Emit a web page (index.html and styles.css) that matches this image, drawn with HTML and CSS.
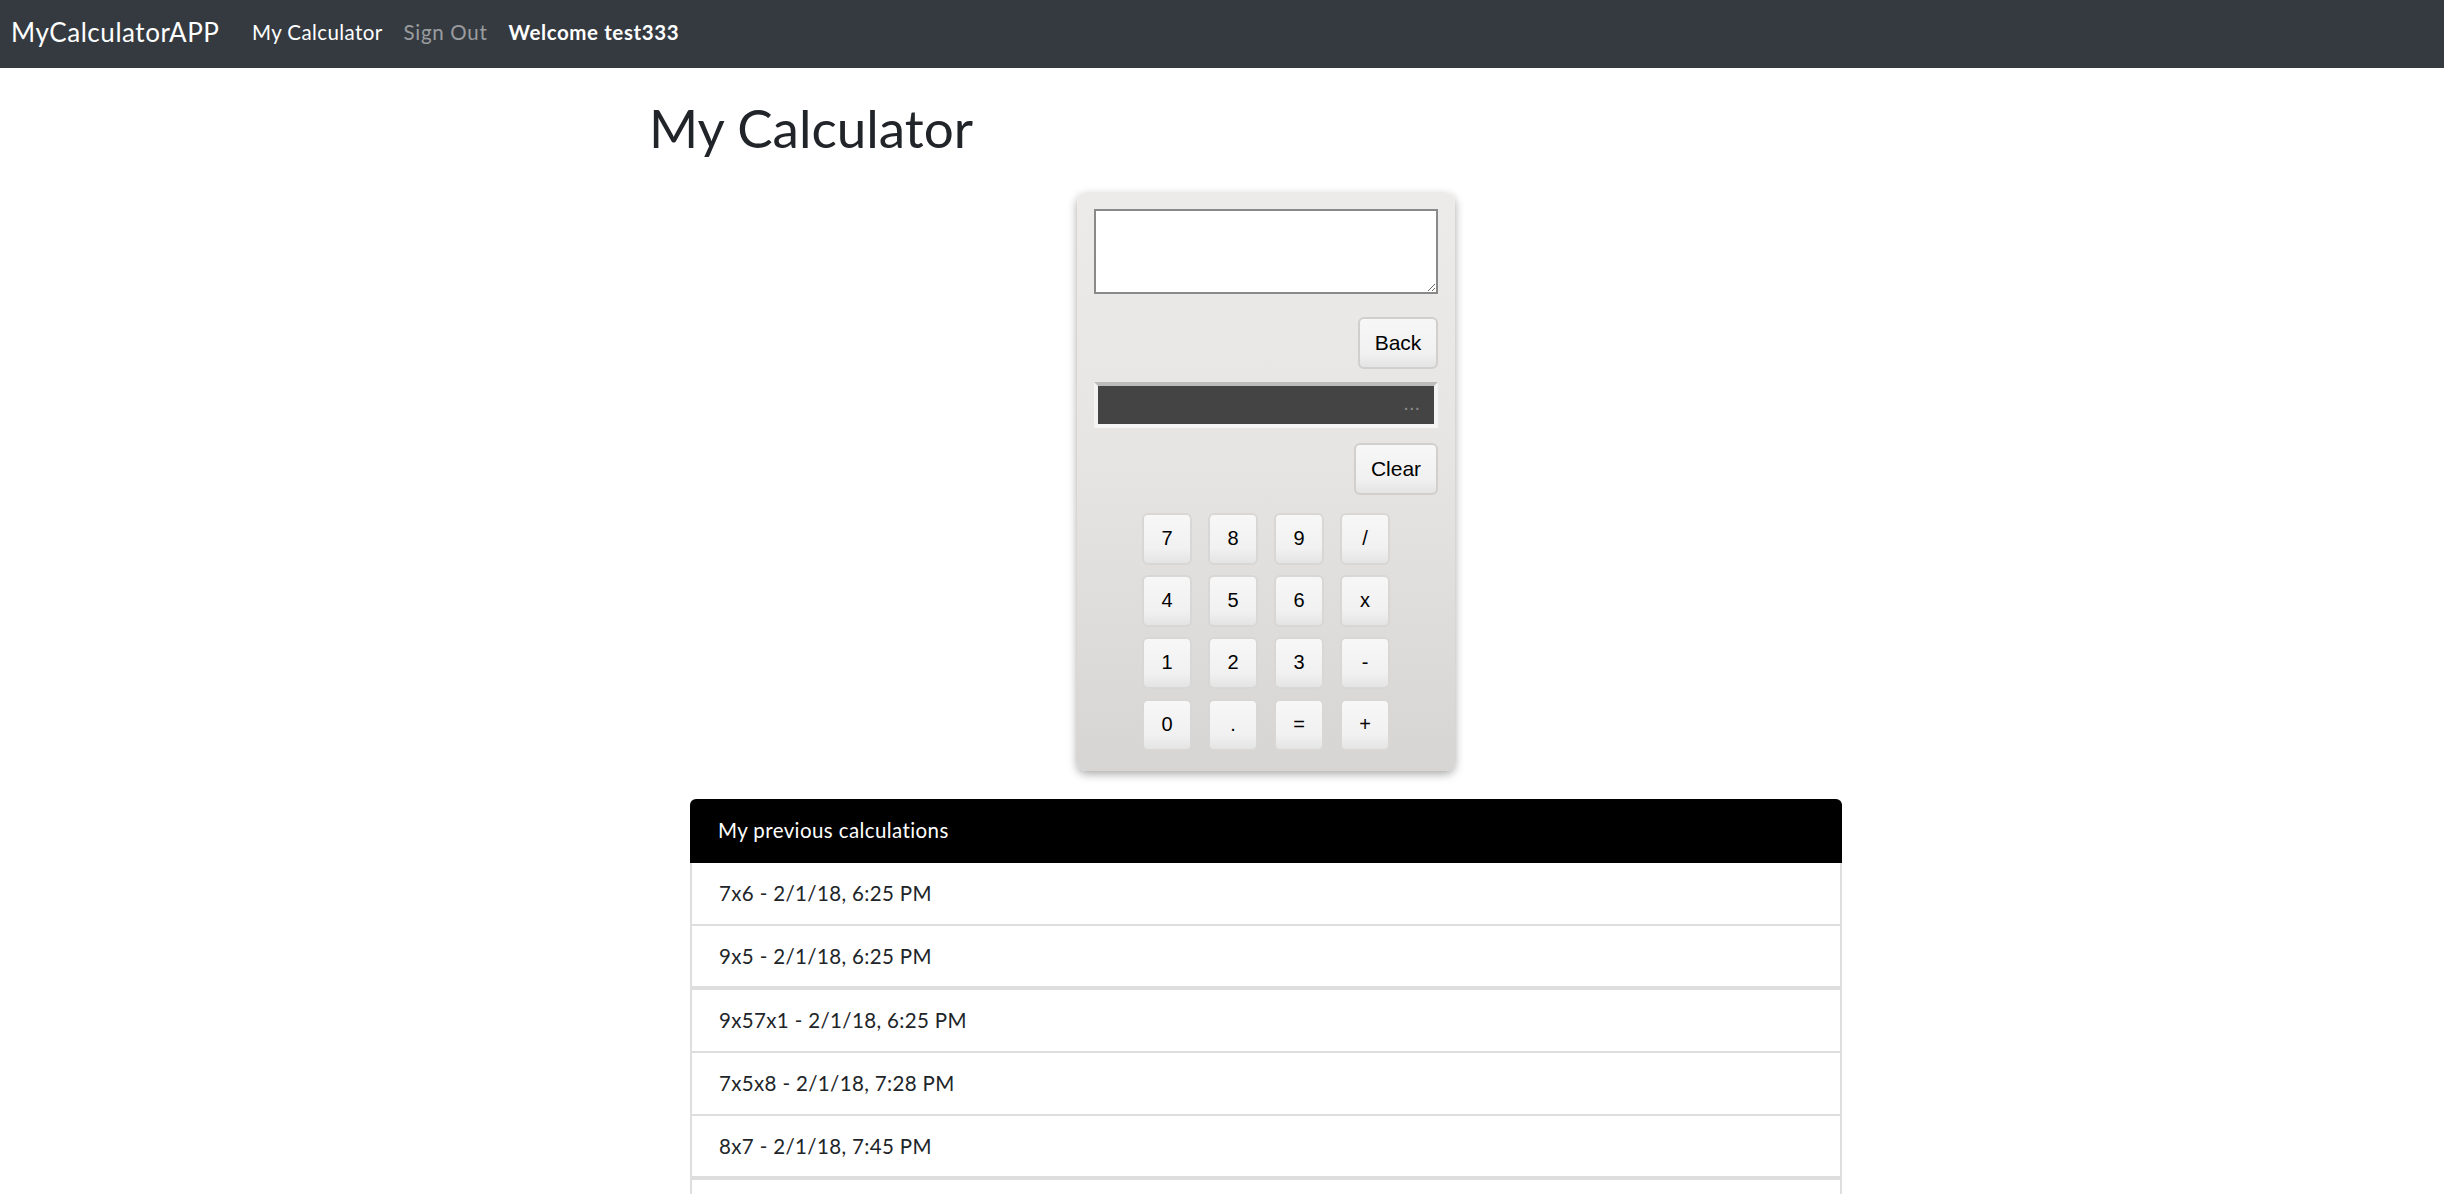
FILE: index.html
```html
<!DOCTYPE html>
<html lang="en">
<head>
<meta charset="utf-8">
<title>MyCalculatorAPP</title>
<link rel="stylesheet" href="styles.css">
</head>
<body>
<nav class="navbar">
  <a class="brand" href="#">MyCalculatorAPP</a>
  <ul class="nav">
    <li><a class="nav-link active" href="#">My Calculator</a></li>
    <li><a class="nav-link muted" href="#">Sign Out</a></li>
    <li><span class="nav-link welcome">Welcome test333</span></li>
  </ul>
</nav>
<main class="page">
  <h1 class="title">My Calculator</h1>
  <div class="content">
    <div class="calc">
      <textarea class="calc-input"></textarea>
      <div class="calc-row"><button class="calc-btn wide">Back</button></div>
      <input class="calc-display" type="text" placeholder="...">
      <div class="calc-row clear-row"><button class="calc-btn wide clear">Clear</button></div>
      <div class="keypad">
        <button class="key">7</button><button class="key">8</button><button class="key">9</button><button class="key">/</button>
        <button class="key">4</button><button class="key">5</button><button class="key">6</button><button class="key">x</button>
        <button class="key">1</button><button class="key">2</button><button class="key">3</button><button class="key">-</button>
        <button class="key">0</button><button class="key">.</button><button class="key">=</button><button class="key">+</button>
      </div>
    </div>
    <ul class="history">
      <li class="history-head">My previous calculations</li>
      <li class="history-item">7x6 - 2/1/18, 6:25 PM</li>
      <li class="history-item sep">9x5 - 2/1/18, 6:25 PM</li>
      <li class="history-item">9x57x1 - 2/1/18, 6:25 PM</li>
      <li class="history-item">7x5x8 - 2/1/18, 7:28 PM</li>
      <li class="history-item sep">8x7 - 2/1/18, 7:45 PM</li>
      <li class="history-item"></li>
    </ul>
  </div>
</main>
</body>
</html>
```
FILE: styles.css
```css
* { box-sizing: border-box; }
html, body { margin: 0; padding: 0; }
body {
  font-family: Lato, "Noto Sans", sans-serif;
  color: #212529;
  background: #fff;
  overflow: hidden;
  height: 1194px;
}
.navbar {
  display: flex;
  align-items: center;
  height: 68px;
  padding: 0 11px 4px;
  background: #343a40;
}
.brand {
  font-size: 26px;
  color: #fff;
  text-decoration: none;
  margin-right: 22px;
  letter-spacing: 0.55px;
}
.nav {
  display: flex;
  list-style: none;
  margin: 0;
  padding: 0;
}
.nav-link {
  display: block;
  padding: 0 10.5px;
  font-size: 20.5px;
  color: #fff;
  text-decoration: none;
  letter-spacing: 0.4px;
}
.nav-link.muted { color: rgba(255,255,255,0.5); letter-spacing: 0.7px; }
.nav-link.welcome { font-weight: 700; letter-spacing: 0.6px; }
.page {
  padding-left: 649px;
}
.title {
  margin: 0;
  padding-top: 28px;
  font-size: 53px;
  font-weight: 400;
  line-height: 1.2;
  color: #212529;
}
.content {
  width: 1152px;
  margin-left: 41px;
  padding-top: 33px;
}
.calc {
  width: 378px;
  margin: 0 auto;
  padding: 16px 17px 20px;
  border-radius: 9px;
  background: linear-gradient(#ecebe9, #e6e5e3 45%, #d6d5d3);
  box-shadow: 0 3px 10px rgba(0,0,0,0.35);
  display: flex;
  flex-direction: column;
  font-family: "Liberation Sans", Arial, sans-serif;
}
.calc-input {
  display: block;
  width: 344px;
  height: 85px;
  margin: 0;
  border: 2px solid #898989;
  background: #fff;
  border-radius: 0;
  padding: 4px;
}
.calc-row {
  display: flex;
  justify-content: flex-end;
  margin-top: 23px;
}
.clear-row { margin-top: 15px; }
.calc-btn, .key {
  font-family: "Liberation Sans", Arial, sans-serif;
  color: #000;
  border: 2px solid #d0cfcd;
  border-radius: 6px;
  background: linear-gradient(#f7f7f7, #f1f1f1 70%, #e4e4e4);
  padding: 0;
  cursor: pointer;
}
.calc-btn {
  width: 80px;
  height: 52px;
  font-size: 21px;
}
.calc-btn.clear { width: 84px; }
.calc-display {
  display: block;
  width: 344px;
  height: 46px;
  margin: 13px 0 0;
  padding: 0 14px;
  border-style: solid;
  border-width: 4px;
  border-color: #bdbcbb #f3f3f3 #f5f5f5 #f3f3f3;
  background: #444;
  color: #fff;
  text-align: right;
  font-size: 16px;
  outline: none;
}
.calc-display::placeholder { color: #8c8c8c; font-size: 20px; }
.keypad {
  margin-top: 18px;
  align-self: center;
  display: grid;
  grid-template-columns: repeat(4, 50px);
  grid-auto-rows: 52px;
  column-gap: 16px;
  row-gap: 10px;
}
.key {
  font-size: 20px;
  width: 50px;
  height: 52px;
  border-color: #d8d7d6;
}
.history {
  list-style: none;
  margin: 28px 0 0;
  padding: 0;
  font-size: 20.5px;
  letter-spacing: 0.35px;
}
.history-head {
  height: 64px;
  display: flex;
  align-items: center;
  padding: 0 28px 2px;
  background: #000;
  color: #fff;
  border-radius: 6px 6px 0 0;
  letter-spacing: 0.4px;
}
.history-item {
  height: 63px;
  display: flex;
  align-items: center;
  padding: 0 27px;
  border: 2px solid #dedede;
  border-top: 0;
  color: #212529;
}
.history-item.sep { border-bottom-width: 4px; height: 64px; }
```
